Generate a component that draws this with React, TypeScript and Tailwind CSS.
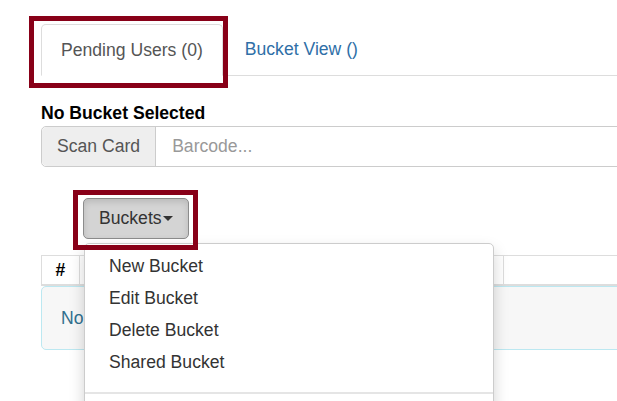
export default function App() {
  return (
    <div className="relative h-[401px] w-[617px] overflow-hidden bg-white font-['Liberation_Sans',Arial,sans-serif] text-[17.6px] text-[#333]">
      <div className="w-[1000px] pl-[41px] pt-[24px]">
        {/* Tabs */}
        <div className="flex border-b border-[#ddd]">
          <div className="-mb-px flex h-[52px] items-center rounded-t-[5px] border border-[#ddd] border-b-white bg-white px-[19px] leading-[25px] text-[#555]">
            Pending Users (0)
          </div>
          <div className="ml-[2px] flex h-[51px] items-center px-[20px] leading-[25px] text-[#2f6fa7]">
            Bucket View ()
          </div>
        </div>

        <div className="mt-[26px] mb-[2px] font-bold leading-[22px] text-black">
          No Bucket Selected
        </div>

        {/* Scan card input group */}
        <div className="flex h-[41px] rounded-[5px] border border-[#ccc]">
          <div className="flex items-center rounded-l-[5px] border-r border-[#ccc] bg-[#eee] px-[15px] text-[#555]">
            Scan Card
          </div>
          <div className="flex flex-1 items-center px-[16px] text-[#999]">Barcode...</div>
        </div>

        {/* Buckets button */}
        <div className="mt-[31px] ml-[42px] flex">
          <button className="flex h-[41px] items-center rounded-[5px] border border-[#8c8c8c] bg-[#d4d4d4] px-[15px] leading-[25px] text-[#333] shadow-[inset_0_3px_6px_rgba(0,0,0,0.125)]">
            Buckets
            <span className="ml-[1px] inline-block h-0 w-0 border-x-[5px] border-t-[5px] border-x-transparent border-t-[#333]" />
          </button>
        </div>

        {/* Table */}
        <div className="mt-[16px]">
          <div className="flex h-[31px] border-t border-b-2 border-[#ddd]">
            <div className="flex w-[39px] items-center justify-center border-x border-[#ddd] font-bold text-black">#</div>
            <div className="w-[424px] border-r border-[#ddd]" />
            <div className="flex-1" />
          </div>
          <div className="flex h-[64px] items-center rounded-[5px] border border-[#bce8f1] bg-[#f7f7f7] px-[19px] text-[#31708f]">
            No
          </div>
        </div>
      </div>

      {/* Dropdown menu */}
      <div className="absolute left-[84px] top-[243px] h-[200px] w-[410px] rounded-[5px] border border-[#ccc] bg-white py-[6px] shadow-[0_7px_15px_rgba(0,0,0,0.175)]">
        {["New Bucket", "Edit Bucket", "Delete Bucket", "Shared Bucket"].map((t) => (
          <div key={t} className="px-[24px] py-[4px] leading-[24px] text-[#333]">
            {t}
          </div>
        ))}
        <div className="mt-[14px] h-[2px] bg-[#e5e5e5]" />
      </div>

      {/* Highlight boxes */}
      <div className="pointer-events-none absolute left-[29px] top-[16px] h-[72px] w-[199px] border-[5px] border-[#880018]" />
      <div className="pointer-events-none absolute left-[73px] top-[190px] h-[60px] w-[125px] border-[5px] border-[#880018]" />
    </div>
  );
}
